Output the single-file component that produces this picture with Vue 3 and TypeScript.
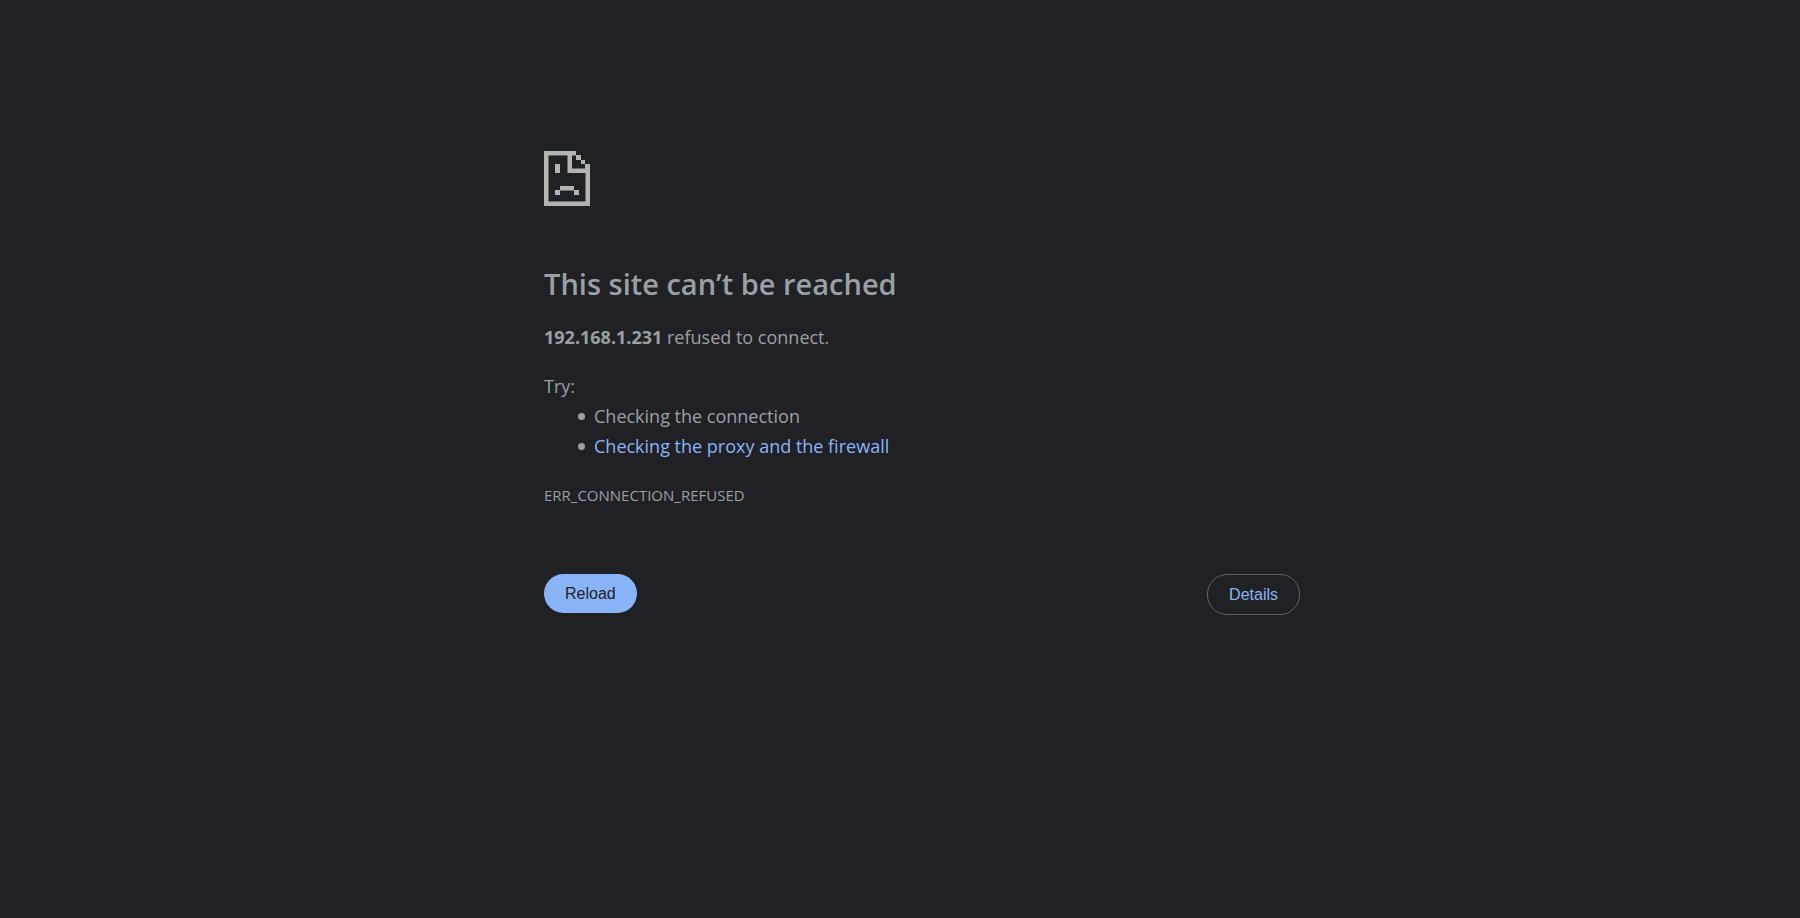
<script setup lang="ts">
import { ref } from 'vue'

const host = '192.168.1.231'
const errorCode = 'ERR_CONNECTION_REFUSED'
const showDetails = ref(false)

function reload(): void {
  window.location.reload()
}
</script>

<template>
  <main class="page">
    <div class="wrapper">
      <svg class="icon" viewBox="0 0 46 55" aria-hidden="true">
        <path
          fill-rule="evenodd"
          d="M0 0H32V4H37V9H41V13H46V55H0ZM4.5 4.5V50.500H41.500V22H23.500V4.500ZM28 4.500V17.500H41V13H37V9H32V4.500Z"
        />
        <path d="M11 13H16V22H11ZM16 35H30V39H35V44H30V39.500H16V44H11V39H16Z" />
      </svg>
      <h1>This site can’t be reached</h1>
      <p><strong>{{ host }}</strong> refused to connect.</p>
      <div class="suggestions">
        <p>Try:</p>
        <ul>
          <li>Checking the connection</li>
          <li><a href="#proxy">Checking the proxy and the firewall</a></li>
        </ul>
      </div>
      <p class="code">{{ errorCode }}</p>
      <div class="buttons">
        <button class="reload" type="button" @click="reload">Reload</button>
        <button
          class="details"
          type="button"
          :aria-expanded="showDetails"
          @click="showDetails = !showDetails"
        >
          Details
        </button>
      </div>
    </div>
  </main>
</template>

<style>
body {
  margin: 0;
  background: #202124;
}
</style>

<style scoped>
.page {
  box-sizing: border-box;
  min-height: 100vh;
  padding: 151px 0 40px 44px;
  background: #202124;
  color: #9aa0a6;
  font: 18px/30px "Segoe UI", "Open Sans", "Noto Sans", sans-serif;
}
.wrapper {
  max-width: 756px;
  margin: 0 auto;
}
.icon {
  display: block;
  width: 46px;
  height: 55px;
  fill: #b4b4b3;
}
h1 {
  margin: 60px 0 20px;
  font-size: 29px;
  font-weight: 600;
  line-height: 36px;
}
p {
  margin: 0;
}
.suggestions {
  margin-top: 19px;
}
ul {
  margin: 0;
  padding-left: 34px;
  list-style: none;
}
li {
  display: flex;
  align-items: center;
  gap: 9px;
}
li::before {
  content: "";
  width: 7px;
  height: 7px;
  border-radius: 50%;
  background: #9aa0a6;
}
a {
  color: #8ab4f8;
  text-decoration: none;
}
.code {
  margin-top: 19px;
  font-size: 15px;
}
.buttons {
  display: flex;
  justify-content: space-between;
  align-items: flex-start;
  margin-top: 64px;
}
button {
  box-sizing: content-box;
  padding: 10px 21px;
  border: 0;
  border-radius: 20px;
  font: 16px/19px "Liberation Sans", Arial, sans-serif;
  cursor: pointer;
}
.reload {
  background: #8ab4f8;
  color: #202124;
}
.details {
  border: 1px solid #5f6368;
  background: transparent;
  color: #8ab4f8;
}
</style>
